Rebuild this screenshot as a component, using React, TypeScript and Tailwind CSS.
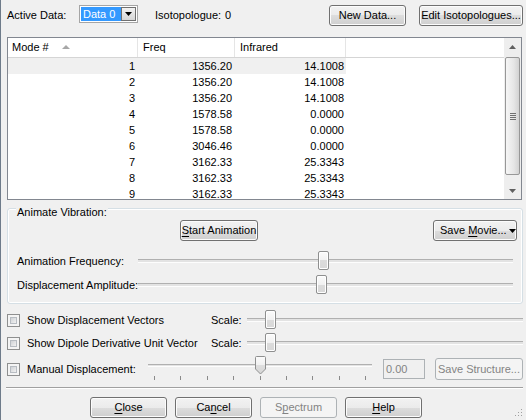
import React from 'react'
import clsx from 'clsx'

const rows = [
  ['1', '1356.20', '14.1008'],
  ['2', '1356.20', '14.1008'],
  ['3', '1356.20', '14.1008'],
  ['4', '1578.58', '0.0000'],
  ['5', '1578.58', '0.0000'],
  ['6', '3046.46', '0.0000'],
  ['7', '3162.33', '25.3343'],
  ['8', '3162.33', '25.3343'],
  ['9', '3162.33', '25.3343'],
]

function Btn({
  children,
  className,
  disabled,
}: {
  children: React.ReactNode
  className?: string
  disabled?: boolean
}) {
  return (
    <div
      className={clsx(
        'flex shrink-0 items-center justify-center whitespace-nowrap rounded-[3px] border',
        disabled
          ? 'border-[#adb2b5] bg-[#f4f4f4] text-[#838383]'
          : 'border-[#707070] bg-[linear-gradient(#f2f2f2_0%,#ebebeb_50%,#dddddd_50%,#cfcfcf_100%)] shadow-[inset_0_0_0_1px_#fcfcfc]',
        className,
      )}
    >
      {children}
    </div>
  )
}

function U({ children }: { children: React.ReactNode }) {
  return <span className="underline underline-offset-[2px]">{children}</span>
}

function Thumb() {
  return (
    <div className="h-[19px] w-[11px] rounded-[2px] border border-[#8e8f8f] bg-[linear-gradient(#fbfbfb_0%,#f1f1f1_50%,#dcdcdc_50%,#d8d8d8_100%)] shadow-[inset_0_0_0_1px_#ffffff]" />
  )
}

function Track({ at, className }: { at: number; className?: string }) {
  return (
    <div className={clsx('flex h-[20px] items-center', className)}>
      <div className="relative h-[4px] flex-1 border-t border-b border-t-[#b0b0b0] border-b-[#fdfdfd] bg-[#e3e3e3]">
        <div className="absolute top-[-9px]" style={{ left: at }}>
          <Thumb />
        </div>
      </div>
    </div>
  )
}

function Check() {
  return (
    <div className="h-[13px] w-[13px] shrink-0 border border-[#8e8f8f] bg-[#f4f4f4] p-[2px]">
      <div className="h-full w-full border border-[#b7bcc2] bg-[linear-gradient(135deg,#cfd2d6_0%,#f1f1f1_100%)]" />
    </div>
  )
}

function ScrollArrow({ up }: { up?: boolean }) {
  return (
    <div className="flex h-[17px] w-full items-center justify-center">
      <svg width="7" height="4" viewBox="0 0 7 4">
        <path d={up ? 'M0 4 L3.5 0 L7 4 Z' : 'M0 0 L3.5 4 L7 0 Z'} fill="#606060" />
      </svg>
    </div>
  )
}

export default function App() {
  return (
    <div className="relative flex h-[420px] w-[526px] flex-col overflow-hidden whitespace-nowrap border-l border-[#6e7b8a] bg-[#f0f0f0] font-['Liberation_Sans',Arial,sans-serif] text-[11px] leading-none text-black">
      {/* top row */}
      <div className="mt-[5px] flex h-[21px] items-start pl-[6px] pr-[3px]">
        <span className="mt-[5px] w-[72px]">Active Data:</span>
        <div className="flex h-[18px] w-[59px] border border-[#a5a5a5] bg-white p-[1px]">
          <span className="flex flex-1 items-center bg-[#3399ff] pl-[2px] text-white">Data 0</span>
          <div className="flex w-[15px] items-center justify-center border border-[#707070] bg-[linear-gradient(#f2f2f2,#d6d6d6)]">
            <svg width="7" height="4" viewBox="0 0 7 4">
              <path d="M0 0 L3.5 4 L7 0 Z" fill="#000" />
            </svg>
          </div>
        </div>
        <span className="ml-[17px] mt-[5px] w-[70px]">Isotopologue:</span>
        <span className="mt-[5px]">0</span>
        <div className="ml-auto flex gap-[13px]">
          <Btn className="h-[21px] w-[77px]">New Data...</Btn>
          <Btn className="h-[21px] w-[104px]">Edit Isotopologues...</Btn>
        </div>
      </div>

      {/* list */}
      <div className="ml-[6px] mt-[11px] flex h-[163px] w-[515px] border border-[#828790] bg-white">
        <div className="flex-1 overflow-hidden">
          <div className="flex h-[20px] border-b border-[#d5d5d5]">
            <div className="flex w-[130px] items-center border-r border-[#e5e5e5] pl-[4px]">
              <span className="w-[50px]">Mode #</span>
              <svg width="8" height="4" viewBox="0 0 8 4" className="mb-[2px]">
                <path d="M0 4 L4 0 L8 4 Z" fill="#a7a7a7" />
              </svg>
            </div>
            <div className="flex w-[97px] items-center border-r border-[#e5e5e5] pl-[5px]">Freq</div>
            <div className="flex w-[111px] items-center border-r border-[#e5e5e5] pl-[5px]">Infrared</div>
            <div className="flex-1" />
          </div>
          {rows.map((r, i) => (
            <div key={r[0]} className="flex h-[16px]">
              <div className={clsx('flex', i === 0 && 'bg-[#f0f0f0]')}>
                <div className="flex w-[130px] items-center justify-end pr-[3px]">{r[0]}</div>
                <div className="flex w-[97px] items-center justify-end pr-[3px]">{r[1]}</div>
                <div className="flex w-[111px] items-center justify-end pr-[2px]">{r[2]}</div>
              </div>
            </div>
          ))}
        </div>
        <div className="flex w-[17px] flex-col bg-[#eeeeee]">
          <ScrollArrow up />
          <div className="mx-[1px] mt-[2px] flex h-[118px] items-center justify-center rounded-[2px] border border-[#979797] bg-[linear-gradient(90deg,#f6f6f6_0%,#e6e6e6_60%,#d2d2d2_100%)]">
            <div className="flex flex-col gap-[1px]">
              <div className="h-[1px] w-[6px] bg-[#707070]" />
              <div className="h-[1px] w-[6px] bg-[#707070]" />
              <div className="h-[1px] w-[6px] bg-[#707070]" />
              <div className="h-[1px] w-[6px] bg-[#707070]" />
            </div>
          </div>
          <div className="flex-1" />
          <ScrollArrow />
        </div>
      </div>

      {/* group box */}
      <div className="relative ml-[6px] mt-[8px] h-[96px] w-[516px] rounded-[3px] border border-[#d5dfe5] shadow-[inset_0_0_0_1px_#ffffff]">
        <span className="absolute left-[8px] top-[-2px] bg-[#f0f0f0] px-[1px]">Animate Vibration:</span>
        <div className="flex justify-between pl-[172px] pr-[5px] pt-[11px]">
          <Btn className="h-[21px] w-[78px]">
            <span>
              <U>S</U>tart Animation
            </span>
          </Btn>
          <Btn className="h-[21px] w-[84px] justify-start pl-[6px]">
            <span>
              Save <U>M</U>ovie...
            </span>
            <svg width="7" height="4" viewBox="0 0 7 4" className="ml-[2px]">
              <path d="M0 0 L3.5 4 L7 0 Z" fill="#000" />
            </svg>
          </Btn>
        </div>
        <div className="mt-[10px] flex items-center pl-[9px] pr-[9px]">
          <span className="w-[121px] shrink-0">Animation Frequency:</span>
          <Track at={180} className="flex-1" />
        </div>
        <div className="mt-[4px] flex items-center pl-[9px] pr-[9px]">
          <span className="w-[121px] shrink-0">Displacement Amplitude:</span>
          <Track at={178} className="flex-1" />
        </div>
      </div>

      {/* checkbox rows */}
      <div className="mt-[6px] flex h-[20px] items-center pl-[6px] pr-[3px]">
        <Check />
        <span className="ml-[7px] w-[184px] shrink-0">Show Displacement Vectors</span>
        <span className="w-[36px] shrink-0">Scale:</span>
        <Track at={18} className="flex-1" />
      </div>
      <div className="mt-[3px] flex h-[20px] items-center pl-[6px] pr-[3px]">
        <Check />
        <span className="ml-[7px] w-[184px] shrink-0">Show Dipole Derivative Unit Vector</span>
        <span className="w-[36px] shrink-0">Scale:</span>
        <Track at={18} className="flex-1" />
      </div>
      <div className="mt-[5px] flex h-[22px] items-center pl-[6px] pr-[3px]">
        <Check />
        <span className="ml-[7px] w-[121px] shrink-0">Manual Displacement:</span>
        <div className="flex h-[22px] w-[224px] shrink-0 flex-col">
          <div className="flex h-[16px] items-center">
            <div className="relative h-[3px] flex-1 border-t border-b border-t-[#b0b0b0] border-b-[#fdfdfd] bg-[#e3e3e3]">
              <svg width="11" height="19" viewBox="0 0 11 19" className="absolute left-[107px] top-[-9px]">
                <defs>
                  <linearGradient id="tg" x1="0" y1="0" x2="0" y2="1">
                    <stop offset="0" stopColor="#fbfbfb" />
                    <stop offset="0.5" stopColor="#f0f0f0" />
                    <stop offset="0.5" stopColor="#dedede" />
                    <stop offset="1" stopColor="#d6d6d6" />
                  </linearGradient>
                </defs>
                <path d="M0.5 1.5 Q0.5 0.5 1.5 0.5 H9.5 Q10.5 0.5 10.5 1.5 V13 L5.5 18 L0.5 13 Z" fill="url(#tg)" stroke="#8e8f8f" />
              </svg>
            </div>
          </div>
          <div className="flex justify-between px-[6px] pt-[3px]">
            {Array.from({ length: 9 }).map((_, i) => (
              <div key={i} className="h-[4px] w-[1px] bg-[#8a8a8a]" />
            ))}
          </div>
        </div>
        <div className="ml-[11px] flex h-[20px] w-[42px] items-center border border-[#adb2b5] bg-[#f0f0f0] pl-[2px] text-[#838383]">
          0.00
        </div>
        <Btn disabled className="ml-[10px] h-[22px] w-[88px]">
          Save Structure...
        </Btn>
      </div>

      <div className="ml-[5px] mr-[3px] mt-[7px] border-t border-b border-t-[#a0a0a0] border-b-white" />

      <div className="ml-[89px] mt-[8px] flex gap-[8px]">
        <Btn className="h-[21px] w-[77px]">
          <span>
            <U>C</U>lose
          </span>
        </Btn>
        <Btn className="h-[21px] w-[77px]">
          <span>
            Ca<U>n</U>cel
          </span>
        </Btn>
        <Btn disabled className="h-[21px] w-[77px]">
          <span>
            S<U>p</U>ectrum
          </span>
        </Btn>
        <Btn className="h-[21px] w-[77px]">
          <span>
            <U>H</U>elp
          </span>
        </Btn>
      </div>

      <svg width="10" height="10" viewBox="0 0 10 10" className="absolute bottom-[3px] right-[3px]">
        {[
          [8, 2],
          [5, 5],
          [8, 5],
          [2, 8],
          [5, 8],
          [8, 8],
        ].map(([x, y]) => (
          <rect key={`${x}-${y}`} x={x} y={y} width="1" height="1" fill="#a0a0a0" />
        ))}
      </svg>
    </div>
  )
}
